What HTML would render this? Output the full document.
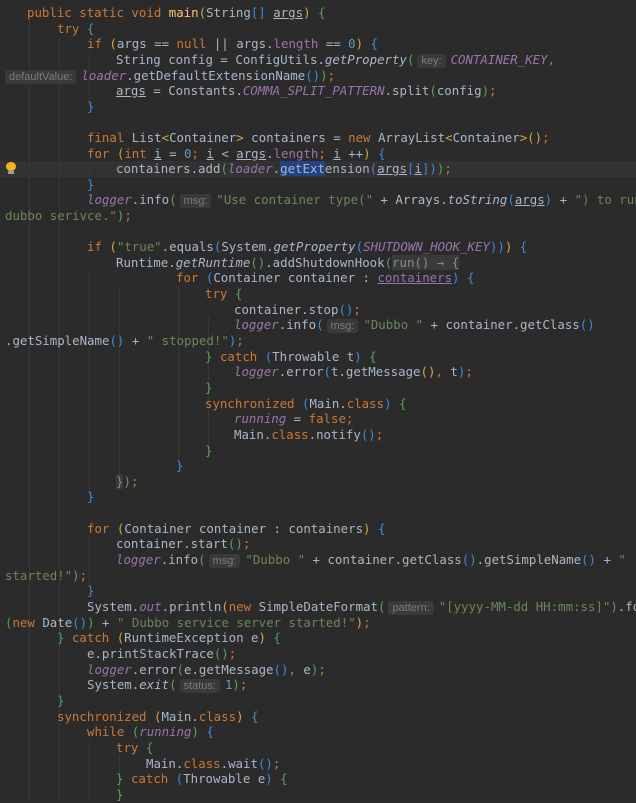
<!DOCTYPE html>
<html><head><meta charset="utf-8"><style>
html,body{margin:0;padding:0}
body{width:636px;height:800px;background:#2b2b2b;overflow:hidden;position:relative;font-family:"DejaVu Sans Mono","Liberation Mono",monospace;font-size:12.4px;color:#a9b7c6}
.l{position:absolute;height:15.65px;line-height:15.65px;white-space:pre}
.k{color:#cc7832}.f{color:#9876aa}.fi{color:#9876aa;font-style:italic}.s{color:#6a8759}.n{color:#6897bb}.i{font-style:italic}
.y{color:#d6a53e}.g{color:#5fa05a}.b{color:#3a8be0}.t{color:#3aa08a}.u{text-decoration:underline}
.h{background:#3a3a3a;color:#7c7c7c;font-family:"Liberation Sans","DejaVu Sans",sans-serif;font-size:11px;border-radius:3px;padding:1px 4px;margin:0 5px 0 3px}
.fold{background:#3a3a3a;color:#8a8a8a}
.cur{position:absolute;left:0;width:636px;top:161px;height:16px;background:#323232}
.sel{background:#214283}
.gd{position:absolute;width:1px;background:#383838}
</style></head><body>
<div class="cur"></div>
<div class="gd" style="left:29px;top:20px;height:780px"></div>
<div class="gd" style="left:59px;top:36px;height:764px"></div>
<div class="gd" style="left:89px;top:52px;height:55px"></div>
<div class="gd" style="left:89px;top:161px;height:20px"></div>
<div class="gd" style="left:89px;top:270px;height:225px"></div>
<div class="gd" style="left:89px;top:536px;height:50px"></div>
<div class="gd" style="left:89px;top:740px;height:60px"></div>
<div class="gd" style="left:119px;top:286px;height:200px"></div>
<div class="gd" style="left:178px;top:286px;height:180px"></div>
<div class="gd" style="left:208px;top:317px;height:140px"></div>
<div class="gd" style="left:119px;top:755px;height:45px"></div>
<div style="position:absolute;left:6px;top:162px;width:10px;height:9px;border-radius:5px;background:#f0b429"></div>
<div style="position:absolute;left:8px;top:171px;width:6px;height:3px;background:#9a9a9a"></div>

<div class="l" style="left:27px;top:5px"><span class="k">public static void </span><span style="color:#ffc66d">main</span><span class="y">(</span>String<span class="b">[]</span> <span class="u">args</span><span class="y">)</span> <span class="g">{</span></div>
<div class="l" style="left:57px;top:21px"><span class="k">try </span><span class="t">{</span></div>
<div class="l" style="left:87px;top:36px"><span class="k">if </span><span class="y">(</span>args == <span class="k">null</span> || args.<span class="f">length</span> == <span class="n">0</span><span class="y">)</span> <span class="b">{</span></div>
<div class="l" style="left:116px;top:52px">String config = ConfigUtils.<span class="i">getProperty</span><span class="g">(</span><span class="h">key:</span><span class="fi">CONTAINER_KEY</span><span class="k">,</span></div>
<div class="l" style="left:5px;top:68px"><span class="h" style="margin-left:0">defaultValue:</span><span class="fi">loader</span>.getDefaultExtensionName<span class="b">()</span><span class="g">)</span><span class="k">;</span></div>
<div class="l" style="left:116px;top:83px"><span class="u">args</span> = Constants.<span class="fi">COMMA_SPLIT_PATTERN</span>.split<span class="g">(</span>config<span class="g">)</span><span class="k">;</span></div>
<div class="l" style="left:87px;top:99px"><span class="b">}</span></div>
<div class="l" style="left:87px;top:130px"><span class="k">final </span>List<span class="y">&lt;</span>Container<span class="y">&gt;</span> containers = <span class="k">new </span>ArrayList<span class="y">&lt;</span>Container<span class="y">&gt;()</span><span class="k">;</span></div>
<div class="l" style="left:87px;top:146px"><span class="k">for </span><span class="y">(</span><span class="k">int </span><span class="u">i</span> = <span class="n">0</span><span class="k">; </span><span class="u">i</span> &lt; <span class="u">args</span>.<span class="f">length</span><span class="k">; </span><span class="u">i</span> ++<span class="y">)</span> <span class="b">{</span></div>
<div class="l" style="left:116px;top:161px">containers.add<span class="g">(</span><span class="fi">loader</span>.<span class="sel">getExt</span>ension<span class="b">(</span><span class="u">args</span><span class="b">[</span><span class="u">i</span><span class="b">]</span><span class="b">)</span><span class="g">)</span><span class="k">;</span></div>
<div class="l" style="left:87px;top:177px"><span class="b">}</span></div>
<div class="l" style="left:87px;top:192px"><span class="fi">logger</span>.info<span class="g">(</span><span class="h">msg:</span><span class="s">"Use container type("</span> + Arrays.<span class="i">toString</span><span class="b">(</span><span class="u">args</span><span class="b">)</span> + <span class="s">") to run</span></div>
<div class="l" style="left:5px;top:208px"><span class="s">dubbo serivce."</span><span class="g">)</span><span class="k">;</span></div>
<div class="l" style="left:87px;top:239px"><span class="k">if </span><span class="y">(</span><span class="s">"true"</span>.equals<span class="b">(</span>System.<span class="i">getProperty</span><span class="b">(</span><span class="fi">SHUTDOWN_HOOK_KEY</span><span class="b">)</span><span class="b">)</span><span class="y">)</span> <span class="b">{</span></div>
<div class="l" style="left:116px;top:255px">Runtime.<span class="i">getRuntime</span><span class="g">()</span>.addShutdownHook<span class="g">(</span><span class="fold">run() → {</span></div>
<div class="l" style="left:176px;top:270px"><span class="k">for </span><span class="b">(</span>Container container : <span class="f u">containers</span><span class="b">)</span> <span class="b">{</span></div>
<div class="l" style="left:205px;top:286px"><span class="k">try </span><span class="g">{</span></div>
<div class="l" style="left:234px;top:302px">container.stop<span class="b">()</span><span class="k">;</span></div>
<div class="l" style="left:234px;top:317px"><span class="fi">logger</span>.info<span class="b">(</span><span class="h">msg:</span><span class="s">"Dubbo "</span> + container.getClass<span class="b">()</span></div>
<div class="l" style="left:5px;top:333px">.getSimpleName<span class="b">()</span> + <span class="s">" stopped!"</span><span class="b">)</span><span class="k">;</span></div>
<div class="l" style="left:205px;top:349px"><span class="g">}</span> <span class="k">catch </span><span class="b">(</span>Throwable t<span class="b">)</span> <span class="g">{</span></div>
<div class="l" style="left:234px;top:364px"><span class="fi">logger</span>.error<span class="b">(</span>t.getMessage<span class="y">()</span><span class="k">, </span>t<span class="b">)</span><span class="k">;</span></div>
<div class="l" style="left:205px;top:380px"><span class="g">}</span></div>
<div class="l" style="left:205px;top:396px"><span class="k">synchronized </span><span class="b">(</span>Main.<span class="k">class</span><span class="b">)</span> <span class="g">{</span></div>
<div class="l" style="left:234px;top:411px"><span class="fi">running</span> = <span class="k">false;</span></div>
<div class="l" style="left:234px;top:427px">Main.<span class="k">class</span>.notify<span class="b">()</span><span class="k">;</span></div>
<div class="l" style="left:205px;top:443px"><span class="g">}</span></div>
<div class="l" style="left:176px;top:458px"><span class="b">}</span></div>
<div class="l" style="left:116px;top:474px"><span class="fold">}</span><span class="g">)</span><span class="k">;</span></div>
<div class="l" style="left:87px;top:489px"><span class="b">}</span></div>
<div class="l" style="left:87px;top:521px"><span class="k">for </span><span class="y">(</span>Container container : containers<span class="y">)</span> <span class="b">{</span></div>
<div class="l" style="left:116px;top:536px">container.start<span class="g">()</span><span class="k">;</span></div>
<div class="l" style="left:116px;top:552px"><span class="fi">logger</span>.info<span class="g">(</span><span class="h">msg:</span><span class="s">"Dubbo "</span> + container.getClass<span class="b">()</span>.getSimpleName<span class="b">()</span> + <span class="s">"</span></div>
<div class="l" style="left:5px;top:568px"><span class="s">started!"</span><span class="g">)</span><span class="k">;</span></div>
<div class="l" style="left:87px;top:583px"><span class="b">}</span></div>
<div class="l" style="left:87px;top:599px">System.<span class="fi">out</span>.println<span class="y">(</span><span class="k">new </span>SimpleDateFormat<span class="g">(</span><span class="h">pattern:</span><span class="s">"[yyyy-MM-dd HH:mm:ss]"</span><span class="g">)</span>.format</div>
<div class="l" style="left:5px;top:615px"><span class="g">(</span><span class="k">new </span>Date<span class="b">()</span><span class="g">)</span> + <span class="s">" Dubbo service server started!"</span><span class="y">)</span><span class="k">;</span></div>
<div class="l" style="left:57px;top:630px"><span class="t">}</span> <span class="k">catch </span><span class="y">(</span>RuntimeException e<span class="y">)</span> <span class="t">{</span></div>
<div class="l" style="left:87px;top:646px">e.printStackTrace<span class="g">()</span><span class="k">;</span></div>
<div class="l" style="left:87px;top:662px"><span class="fi">logger</span>.error<span class="g">(</span>e.getMessage<span class="b">()</span><span class="k">, </span>e<span class="g">)</span><span class="k">;</span></div>
<div class="l" style="left:87px;top:677px">System.<span class="i">exit</span><span class="g">(</span><span class="h">status:</span><span class="n">1</span><span class="g">)</span><span class="k">;</span></div>
<div class="l" style="left:57px;top:693px"><span class="t">}</span></div>
<div class="l" style="left:57px;top:709px"><span class="k">synchronized </span><span class="y">(</span>Main.<span class="k">class</span><span class="y">)</span> <span class="t">{</span></div>
<div class="l" style="left:87px;top:724px"><span class="k">while </span><span class="g">(</span><span class="fi">running</span><span class="g">)</span> <span class="b">{</span></div>
<div class="l" style="left:116px;top:740px"><span class="k">try </span><span class="g">{</span></div>
<div class="l" style="left:146px;top:756px">Main.<span class="k">class</span>.wait<span class="b">()</span><span class="k">;</span></div>
<div class="l" style="left:116px;top:771px"><span class="g">}</span> <span class="k">catch </span><span class="b">(</span>Throwable e<span class="b">)</span> <span class="g">{</span></div>
<div class="l" style="left:116px;top:787px"><span class="g">}</span></div>
</body></html>
